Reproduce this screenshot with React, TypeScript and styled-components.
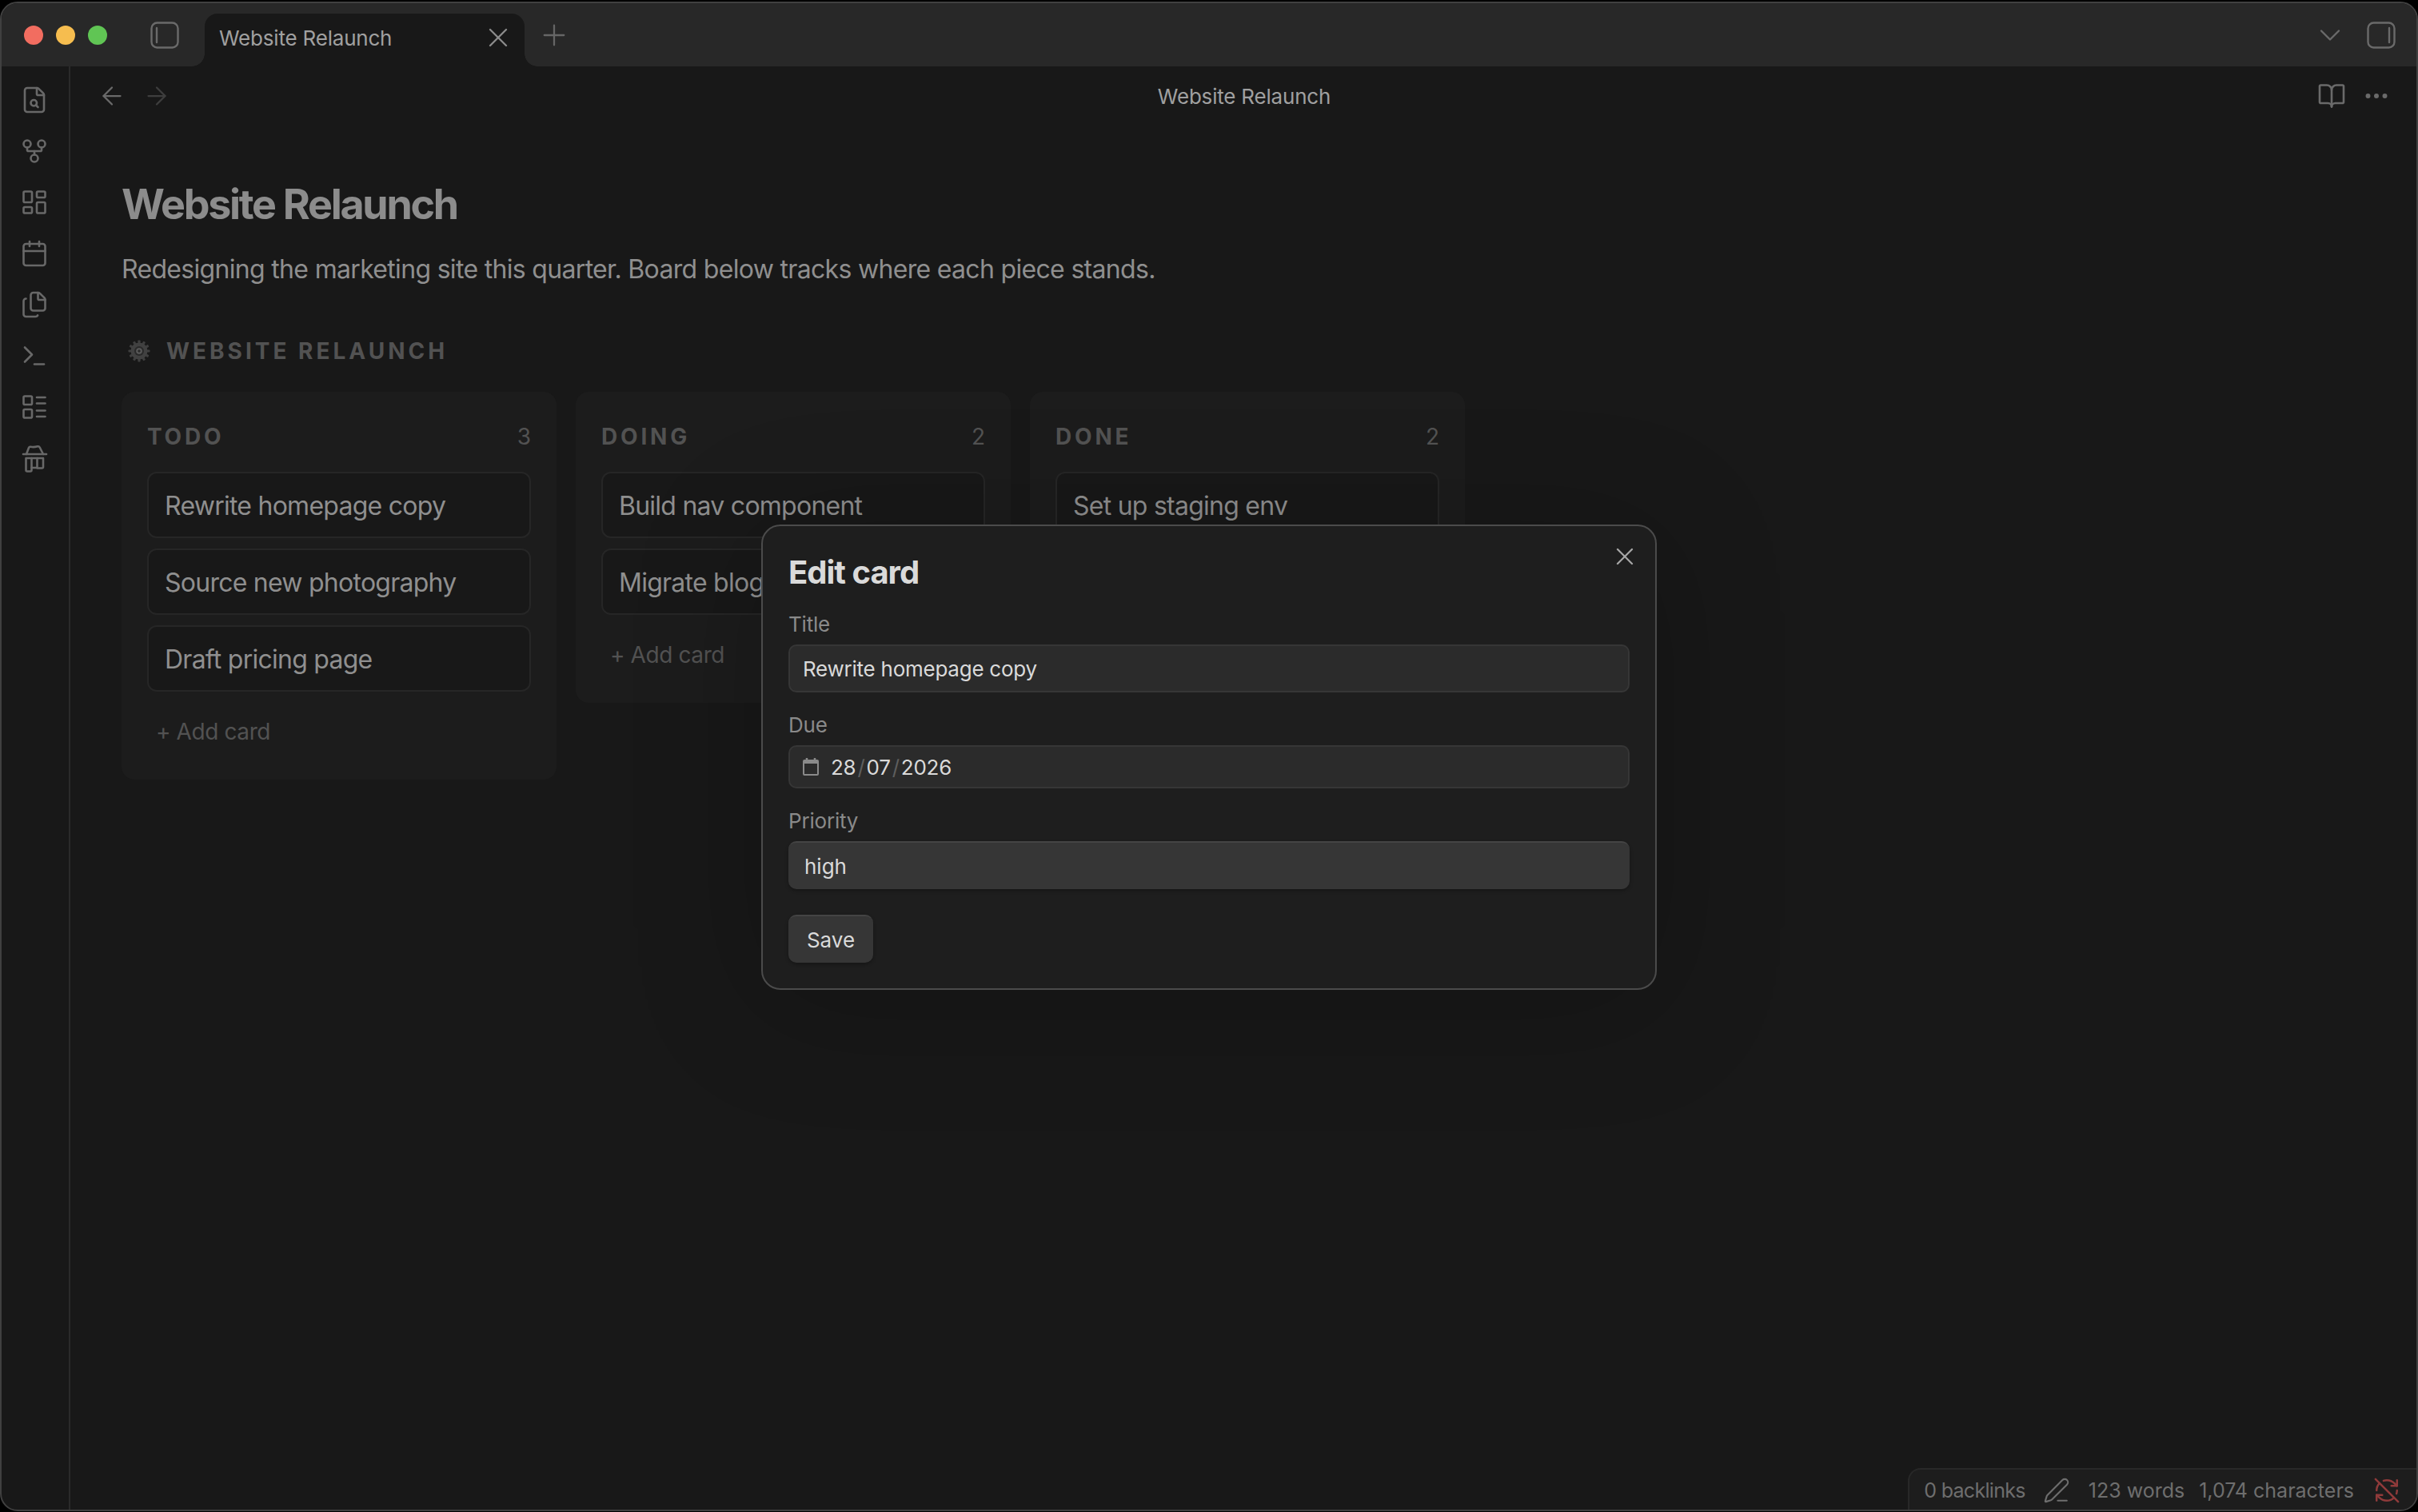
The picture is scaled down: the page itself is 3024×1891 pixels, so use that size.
import styled, { createGlobalStyle } from 'styled-components'
import {
  ArrowLeft,
  ArrowRight,
  BookOpen,
  Calendar,
  ChevronDown,
  Ellipsis,
  FileSearch,
  Files,
  GitFork,
  LayoutDashboard,
  LayoutList,
  PenLine,
  Plus,
  RefreshCwOff,
  Terminal,
  X
} from 'lucide-react'

const columns = [
  { name: 'TODO', count: 3, cards: ['Rewrite homepage copy', 'Source new photography', 'Draft pricing page'] },
  { name: 'DOING', count: 2, cards: ['Build nav component', 'Migrate blog'] },
  { name: 'DONE', count: 2, cards: ['Set up staging env', ''] }
]

export default function App() {
  return (
    <Page>
      <GlobalStyle />
      <AppWindow>
        <TitleBar>
          <TrafficLights>
            <Light color='#f26d60' />
            <Light color='#f6bd4f' />
            <Light color='#60c554' />
          </TrafficLights>
          <PanelToggle>
            <PanelIcon side='left' />
          </PanelToggle>
          <Tab>
            <TabLabel>Website Relaunch</TabLabel>
            <X size={40} strokeWidth={1.4} color='#8c8c8c' />
          </Tab>
          <NewTab>
            <Plus size={42} strokeWidth={1.3} />
          </NewTab>
          <TitleBarEnd>
            <ChevronDown size={44} strokeWidth={1.3} />
            <PanelIcon side='right' />
          </TitleBarEnd>
        </TitleBar>

        <Body>
          <Ribbon>
            <FileSearch size={36} strokeWidth={1.75} />
            <GitFork size={36} strokeWidth={1.75} />
            <LayoutDashboard size={36} strokeWidth={1.75} />
            <Calendar size={36} strokeWidth={1.75} />
            <Files size={36} strokeWidth={1.75} />
            <Terminal size={36} strokeWidth={1.75} />
            <LayoutList size={36} strokeWidth={1.75} />
            <HatBoardIcon />
          </Ribbon>

          <Main>
            <NavBar>
              <NavArrows>
                <ArrowLeft size={36} strokeWidth={1.5} color='#6a6a6a' />
                <ArrowRight size={36} strokeWidth={1.5} color='#3e3e3e' />
              </NavArrows>
              <NavTitle>Website Relaunch</NavTitle>
              <NavActions>
                <BookOpen size={36} strokeWidth={1.75} />
                <Ellipsis size={36} strokeWidth={2} />
              </NavActions>
            </NavBar>

            <Note>
              <Heading>Website Relaunch</Heading>
              <Intro>Redesigning the marketing site this quarter. Board below tracks where each piece stands.</Intro>
              <BoardTitle>
                <GearIcon />
                <span>WEBSITE RELAUNCH</span>
              </BoardTitle>
              <Board>
                {columns.map((column) => (
                  <Column key={column.name}>
                    <ColumnHeader>
                      <ColumnName>{column.name}</ColumnName>
                      <ColumnCount>{column.count}</ColumnCount>
                    </ColumnHeader>
                    <CardList>
                      {column.cards.map((card, i) => (
                        <Card key={i}>{card}</Card>
                      ))}
                    </CardList>
                    <AddCard>+ Add card</AddCard>
                  </Column>
                ))}
              </Board>
            </Note>
          </Main>
        </Body>

        <Modal>
          <CloseButton>
            <X size={36} strokeWidth={1.5} />
          </CloseButton>
          <ModalTitle>Edit card</ModalTitle>
          <FieldLabel>Title</FieldLabel>
          <TextField>Rewrite homepage copy</TextField>
          <FieldLabel>Due</FieldLabel>
          <DateField>
            <CalendarGlyph />
            <DatePart>28</DatePart>
            <DateSlash>/</DateSlash>
            <DatePart>07</DatePart>
            <DateSlash>/</DateSlash>
            <DatePart>2026</DatePart>
          </DateField>
          <FieldLabel>Priority</FieldLabel>
          <SelectField>high</SelectField>
          <SaveButton>Save</SaveButton>
        </Modal>

        <StatusBar>
          <Backlinks>0 backlinks</Backlinks>
          <PenIcon>
            <PenLine size={34} strokeWidth={1.5} />
          </PenIcon>
          <span>123 words</span>
          <span>1,074 characters</span>
          <SyncIcon>
            <RefreshCwOff size={34} strokeWidth={1.75} color='#8f3a3a' />
          </SyncIcon>
        </StatusBar>
      </AppWindow>
    </Page>
  )
}

const PanelIcon = ({ side }: { side: 'left' | 'right' }) => (
  <svg width='36' height='34' viewBox='0 0 36 34' fill='none' stroke='#6a6a6a' strokeLinecap='round'>
    <rect x='1.5' y='1.5' width='33' height='31' rx='7' strokeWidth='2.4' />
    <line x1={side === 'left' ? 8 : 28} y1='8' x2={side === 'left' ? 8 : 28} y2='26' strokeWidth='2.4' />
  </svg>
)

const HatBoardIcon = () => (
  <svg width='36' height='36' viewBox='0 0 36 36' fill='none' stroke='currentColor' strokeWidth='2.6' strokeLinecap='round' strokeLinejoin='round'>
    <path d='M4 13h29' />
    <path d='M8 13l3-8c.4-1 1.4-1.4 2.4-1.2 3 .7 5 .5 8.6-.5 1.2-.3 2.2.2 2.7 1.2L29 13' />
    <path d='M7.5 18h7v15a1.5 1.5 0 0 1-1.5 1.5H9A1.5 1.5 0 0 1 7.5 33z' />
    <path d='M14.5 18h7v10.5a1.5 1.5 0 0 1-1.5 1.5h-5.500' />
    <path d='M21.500 18h7.500v11a1.500 1.500 0 0 1-1.500 1.500h-6' />
  </svg>
)

const GearIcon = () => (
  <svg width='28' height='30' viewBox='0 0 28 28'>
    {Array.from({ length: 12 }).map((_, i) => (
      <rect key={i} x='12.4' y='0.5' width='3.2' height='5' rx='0.8' fill='#3f3f3f' transform={`rotate(${i * 30} 14 14)`} />
    ))}
    <circle cx='14' cy='14' r='10.500' fill='#414141' />
    <circle cx='14' cy='14' r='6' fill='#2a2a2a' />
    <circle cx='14' cy='14' r='3.800' fill='#5a5a5a' />
    <circle cx='14' cy='14' r='1.800' fill='#2a2a2a' />
  </svg>
)

const CalendarGlyph = () => (
  <StyledGlyph width='20' height='22' viewBox='0 0 20 22' fill='none'>
    <path d='M5 0v3M15 0v3' stroke='#8a8a8a' strokeWidth='2.500' />
    <rect x='1' y='3' width='18' height='18' rx='1' stroke='#8a8a8a' strokeWidth='2' />
    <rect x='1' y='3' width='18' height='4' fill='#8a8a8a' />
  </StyledGlyph>
)

const GlobalStyle = createGlobalStyle`
  html,
  body {
    margin: 0;
    padding: 0;
    background: #000;
  }

  * {
    box-sizing: border-box;
  }
`

const StyledGlyph = styled.svg`
  flex: none;
  margin-right: 15px;
`

const Page = styled.div`
  width: 3024px;
  height: 1891px;
  padding: 2px 0 0 0;
  background: #000;
  font-family: Inter, 'Liberation Sans', sans-serif;
`

const AppWindow = styled.div`
  position: relative;
  display: flex;
  flex-direction: column;
  width: 100%;
  height: 1888px;
  overflow: hidden;
  background: #181818;
  border: 2px solid #404040;
  border-radius: 22px;
`

const TitleBar = styled.div`
  display: flex;
  align-items: center;
  flex: none;
  height: 79px;
  background: #282828;
`

const TrafficLights = styled.div`
  display: flex;
  gap: 16px;
  margin-left: 28px;
  margin-top: 1px;
`

const Light = styled.div<{ color: string }>`
  width: 24px;
  height: 24px;
  border-radius: 50%;
  background: ${(p) => p.color};
`

const PanelToggle = styled.div`
  display: flex;
  margin-left: 54px;
`

const Tab = styled.div`
  position: relative;
  display: flex;
  align-items: center;
  justify-content: space-between;
  align-self: flex-end;
  width: 400px;
  height: 66px;
  margin-left: 32px;
  padding: 0 13px 6px 18px;
  background: #181818;
  border-radius: 16px 16px 0 0;

  &::before,
  &::after {
    content: '';
    position: absolute;
    bottom: 0;
    width: 16px;
    height: 16px;
  }

  &::before {
    left: -16px;
    background: radial-gradient(circle at 0 0, transparent 15.5px, #181818 16px);
  }

  &::after {
    right: -16px;
    background: radial-gradient(circle at 100% 0, transparent 15.5px, #181818 16px);
  }
`

const TabLabel = styled.span`
  font-size: 26px;
  letter-spacing: -0.2px;
  color: #a0a0a0;
`

const NewTab = styled.div`
  display: flex;
  margin-left: 16px;
  color: #666;
`

const TitleBarEnd = styled.div`
  display: flex;
  align-items: center;
  gap: 24px;
  margin-left: auto;
  margin-right: 26px;
  color: #6a6a6a;
`

const Body = styled.div`
  display: flex;
  flex: 1;
  min-height: 0;
`

const Ribbon = styled.div`
  display: flex;
  flex-direction: column;
  align-items: center;
  flex: none;
  gap: 28px;
  width: 86px;
  padding: 24px 2px 0 0;
  border-right: 2px solid #2a2a2a;
  color: #686868;
`

const Main = styled.div`
  flex: 1;
  min-width: 0;
`

const NavBar = styled.div`
  display: grid;
  grid-template-columns: 1fr auto 1fr;
  align-items: center;
  height: 74px;
  padding: 0 32px 0 34px;
`

const NavArrows = styled.div`
  display: flex;
  gap: 20px;
`

const NavTitle = styled.div`
  font-size: 26px;
  letter-spacing: -0.2px;
  color: #a0a0a0;
`

const NavActions = styled.div`
  display: flex;
  justify-content: flex-end;
  gap: 20px;
  color: #6a6a6a;
`

const Note = styled.div`
  padding: 68px 0 0 64px;
`

const Heading = styled.h1`
  margin: 0;
  font-size: 52px;
  line-height: 62px;
  font-weight: 700;
  letter-spacing: -2.3px;
  color: #8c8c8c;
`

const Intro = styled.p`
  margin: 26px 0 0;
  font-size: 32px;
  line-height: 48px;
  letter-spacing: -0.68px;
  color: #8f8f8f;
`

const BoardTitle = styled.div`
  display: flex;
  align-items: center;
  gap: 20px;
  margin: 50px 0 0 8px;
  height: 56px;
  font-size: 28px;
  font-weight: 700;
  letter-spacing: 4px;
  color: #525252;
`

const Board = styled.div`
  display: flex;
  align-items: flex-start;
  gap: 24px;
  margin-top: 23px;
`

const Column = styled.div`
  width: 544px;
  padding: 32px 32px 24px;
  background: #1c1c1c;
  border-radius: 16px;
`

const ColumnHeader = styled.div`
  display: flex;
  justify-content: space-between;
  align-items: center;
  height: 42px;
  padding-top: 6px;
  margin-bottom: 26px;
`

const ColumnName = styled.span`
  font-size: 28px;
  font-weight: 700;
  letter-spacing: 3.8px;
  color: #525252;
`

const ColumnCount = styled.span`
  font-size: 28px;
  color: #525252;
`

const CardList = styled.div`
  display: flex;
  flex-direction: column;
  gap: 13px;
`

const Card = styled.div`
  display: flex;
  align-items: center;
  height: 83px;
  padding: 2px 20px 0;
  background: #181818;
  border: 2px solid #262626;
  border-radius: 12px;
  font-size: 32px;
  letter-spacing: -0.75px;
  color: #8f8f8f;
`

const AddCard = styled.div`
  padding: 32px 11px 18px;
  font-size: 28px;
  line-height: 36px;
  letter-spacing: -0.4px;
  color: #525252;
`

const Modal = styled.div`
  position: absolute;
  left: 950px;
  top: 652px;
  display: flex;
  flex-direction: column;
  width: 1120px;
  height: 582px;
  padding: 33px 32px 0;
  background: #1e1e1e;
  border: 2px solid #4b4b4b;
  border-radius: 24px;
  box-shadow: 0 16px 160px rgba(0, 0, 0, 0.22);
`

const CloseButton = styled.div`
  position: absolute;
  top: 20px;
  right: 20px;
  display: flex;
  color: #a8a8a8;
`

const ModalTitle = styled.div`
  margin-bottom: 24px;
  font-size: 40px;
  line-height: 50px;
  font-weight: 700;
  letter-spacing: -1px;
  color: #dadada;
`

const FieldLabel = styled.div`
  flex: none;
  height: 41px;
  font-size: 26px;
  line-height: 32px;
  letter-spacing: -0.2px;
  color: #8a8a8a;
`

const TextField = styled.div`
  display: flex;
  align-items: center;
  flex: none;
  height: 60px;
  margin-bottom: 25px;
  padding: 0 16px;
  background: #2b2b2b;
  border: 2px solid #363636;
  border-radius: 10px;
  font-size: 26px;
  letter-spacing: -0.25px;
  color: #dadada;
`

const DateField = styled(TextField)`
  height: 54px;
  margin-bottom: 25px;
`

const DatePart = styled.span`
  color: #dadada;
`

const DateSlash = styled.span`
  margin: 0 2px;
  color: #5e5e5e;
`

const SelectField = styled.div`
  display: flex;
  align-items: center;
  flex: none;
  height: 60px;
  margin-bottom: 32px;
  padding: 0 20px;
  background: #363636;
  border-top: 2px solid #444;
  border-radius: 10px;
  box-shadow: 0 2px 4px rgba(0, 0, 0, 0.3);
  font-size: 26px;
  color: #dadada;
`

const SaveButton = styled.div`
  display: flex;
  align-items: center;
  justify-content: center;
  flex: none;
  width: 106px;
  height: 60px;
  background: #363636;
  border-top: 2px solid #444;
  border-radius: 10px;
  box-shadow: 0 2px 4px rgba(0, 0, 0, 0.3);
  font-size: 26px;
  color: #dadada;
`

const StatusBar = styled.div`
  position: absolute;
  right: 0;
  bottom: 0;
  display: flex;
  align-items: center;
  gap: 18px;
  height: 52px;
  padding: 2px 20px 0 18px;
  background: #1d1d1d;
  border-top: 2px solid #282828;
  border-left: 2px solid #282828;
  border-top-left-radius: 16px;
  font-size: 25px;
  color: #6e6e6e;
`

const Backlinks = styled.span`
  letter-spacing: -0.7px;
`

const PenIcon = styled.span`
  display: flex;
  margin: 0 5px 0 4px;
`

const SyncIcon = styled.span`
  display: flex;
  margin-left: 6px;
`
